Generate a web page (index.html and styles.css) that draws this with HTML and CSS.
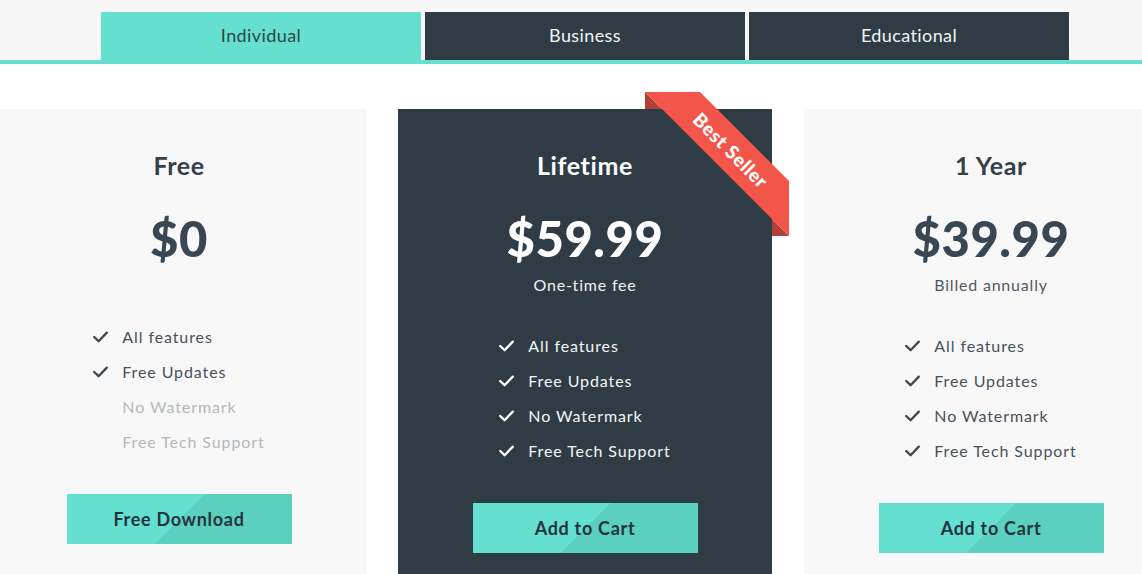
FILE: index.html
```html
<!DOCTYPE html>
<html lang="en">
<head>
<meta charset="utf-8">
<title>Pricing</title>
<link rel="stylesheet" href="styles.css">
</head>
<body>
<div class="tabs-bar">
  <div class="wrap tabs">
    <div class="tab tab-active">Individual</div>
    <div class="tab">Business</div>
    <div class="tab">Educational</div>
  </div>
</div>

<div class="wrap cards">
  <div class="card card-free">
    <h2 class="plan">Free</h2>
    <div class="price">$0</div>
    <ul class="features">
      <li><svg class="check" viewBox="0 0 15 12"><polyline points="1.2,6 5.6,10.2 13.8,1.6"/></svg>All features</li>
      <li><svg class="check" viewBox="0 0 15 12"><polyline points="1.2,6 5.6,10.2 13.8,1.6"/></svg>Free Updates</li>
      <li class="off"><span class="check-gap"></span>No Watermark</li>
      <li class="off"><span class="check-gap"></span>Free Tech Support</li>
    </ul>
    <div class="btn">Free Download</div>
  </div>

  <div class="card card-dark">
    <div class="ribbon">
      <svg class="ribbon-shape" viewBox="0 0 145 145">
        <polygon class="fold" points="0,0 0,17 17,17"/>
        <polygon class="fold" points="127,127 127,144 144,144"/>
        <polygon class="band" points="0,0 55,0 144,89 144,144"/>
      </svg>
      <span class="ribbon-text">Best Seller</span>
    </div>
    <h2 class="plan">Lifetime</h2>
    <div class="price">$59.99</div>
    <div class="sub">One-time fee</div>
    <ul class="features">
      <li><svg class="check" viewBox="0 0 15 12"><polyline points="1.2,6 5.6,10.2 13.8,1.6"/></svg>All features</li>
      <li><svg class="check" viewBox="0 0 15 12"><polyline points="1.2,6 5.6,10.2 13.8,1.6"/></svg>Free Updates</li>
      <li><svg class="check" viewBox="0 0 15 12"><polyline points="1.2,6 5.6,10.2 13.8,1.6"/></svg>No Watermark</li>
      <li><svg class="check" viewBox="0 0 15 12"><polyline points="1.2,6 5.6,10.2 13.8,1.6"/></svg>Free Tech Support</li>
    </ul>
    <div class="btn">Add to Cart</div>
  </div>

  <div class="card">
    <h2 class="plan">1 Year</h2>
    <div class="price">$39.99</div>
    <div class="sub">Billed annually</div>
    <ul class="features">
      <li><svg class="check" viewBox="0 0 15 12"><polyline points="1.2,6 5.6,10.2 13.8,1.6"/></svg>All features</li>
      <li><svg class="check" viewBox="0 0 15 12"><polyline points="1.2,6 5.6,10.2 13.8,1.6"/></svg>Free Updates</li>
      <li><svg class="check" viewBox="0 0 15 12"><polyline points="1.2,6 5.6,10.2 13.8,1.6"/></svg>No Watermark</li>
      <li><svg class="check" viewBox="0 0 15 12"><polyline points="1.2,6 5.6,10.2 13.8,1.6"/></svg>Free Tech Support</li>
    </ul>
    <div class="btn">Add to Cart</div>
  </div>
</div>
</body>
</html>
```

FILE: styles.css
```css
html, body {
  margin: 0;
  padding: 0;
  background: #ffffff;
  overflow: hidden;
  font-family: Lato, "Noto Sans", sans-serif;
  color: #36424c;
}

.wrap {
  width: 1186px;
  margin-left: -8px;
}

.tabs-bar {
  background: #f7f7f7;
  padding-top: 12px;
  border-bottom: 4px solid #64dfd0;
}

.tabs {
  display: flex;
  justify-content: center;
  gap: 4px;
}

.tab {
  width: 320px;
  height: 48px;
  background: #2f3c45;
  color: #f2f5f6;
  font-size: 18px;
  line-height: 47px;
  text-align: center;
  letter-spacing: 0.4px;
}

.tab-active {
  background: #64dfd0;
  color: #2b4848;
}

.cards {
  display: grid;
  grid-template-columns: repeat(3, 374px);
  gap: 32px;
  margin-top: 45px;
}

.card {
  position: relative;
  background: #f8f8f8;
  min-height: 520px;
  padding-top: 40px;
  display: flex;
  flex-direction: column;
  align-items: center;
}

.card-dark {
  background: #2f3c46;
  color: #ffffff;
}

.plan {
  margin: 0;
  font-size: 25px;
  line-height: 32px;
  font-weight: 700;
  color: #353f48;
  letter-spacing: 0.6px;
}

.card-dark .plan {
  color: #ffffff;
}

.price {
  margin-top: 27px;
  font-size: 49px;
  line-height: 60px;
  font-weight: 900;
  color: #394755;
  letter-spacing: 0.5px;
}

.card-dark .price {
  color: #ffffff;
}

.sub {
  margin-top: 5px;
  font-size: 16px;
  line-height: 24px;
  color: #505a63;
  letter-spacing: 0.8px;
}

.card-dark .sub {
  color: #f1f3f4;
}

.features {
  list-style: none;
  margin: 31px 0 0;
  padding: 0;
}

.card-free .features {
  margin-top: 51px;
}

.features li {
  display: flex;
  align-items: center;
  height: 35px;
  font-size: 16px;
  color: #48525b;
  letter-spacing: 0.9px;
}

.card-dark .features li {
  color: #f4f6f7;
}

.features li.off {
  color: #b3b8bd;
}

.check {
  width: 15px;
  height: 12px;
  margin-right: 14px;
  flex: none;
  fill: none;
  stroke: #3c4852;
  stroke-width: 2.3;
  stroke-linecap: round;
  stroke-linejoin: round;
}

.card-dark .check {
  stroke: #ffffff;
}

.check-gap {
  width: 15px;
  margin-right: 14px;
  flex: none;
}

.btn {
  margin-top: 35px;
  width: 225px;
  height: 50px;
  line-height: 50px;
  text-align: center;
  font-size: 18px;
  font-weight: 700;
  color: #23343e;
  letter-spacing: 0.7px;
  background: linear-gradient(135deg, #64dfd0 0%, #64dfd0 50%, #5bcfc0 50%, #5bcfc0 100%);
}

.ribbon {
  position: absolute;
  left: 247px;
  top: -17px;
  width: 145px;
  height: 145px;
}

.ribbon-shape {
  display: block;
  width: 145px;
  height: 145px;
}

.ribbon-shape .band {
  fill: #f4554b;
}

.ribbon-shape .fold {
  fill: #b23f38;
}

.ribbon-text {
  position: absolute;
  left: 86px;
  top: 58px;
  transform: translate(-50%, -50%) rotate(45deg);
  white-space: nowrap;
  font-size: 19px;
  font-weight: 900;
  color: #ffffff;
  letter-spacing: 0.6px;
}
```
